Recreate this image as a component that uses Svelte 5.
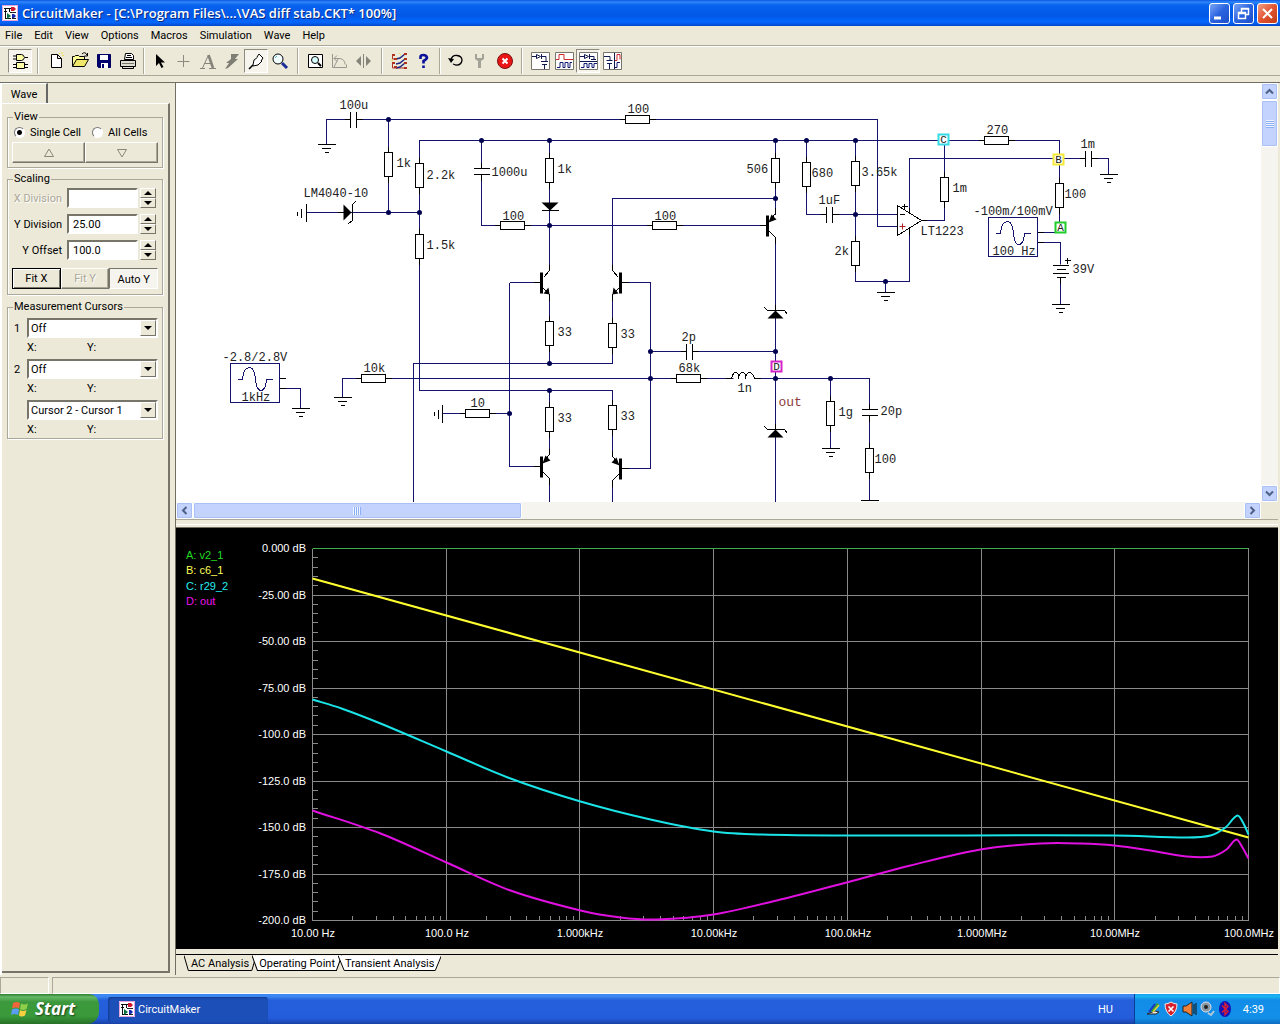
<script lang="ts">
  const menus = ['File', 'Edit', 'View', 'Options', 'Macros', 'Simulation', 'Wave', 'Help'];

  // '|' is a separator, '!' a narrow one
  const tools = [
    'parts', '|', 'new', 'open', 'save', 'print', '!',
    'arrow', 'wire', 'text', 'delete', 'probe', 'zoom', '|',
    'fit', 'rotate', 'mirror', '|', 'mode', 'help', '!',
    'reset', 'wrench', 'stop', '|', 'split1', 'split2', 'split3', 'split4',
  ];
  const pressed = ['parts', 'probe', 'split3'];

  let cell = $state('single');
  let yDivision = $state('25.00');
  let yOffset = $state('100.0');

  const wires = [
    'M326 144V119H350', 'M356 119H877V226H897', 'M388 119V212', 'M306 212H419',
    'M419 212V140H1059V158', 'M419 212V390H612V454', 'M481 140V168M481 174V225H549', 'M549 140V270',
    'M549 225H767', 'M612 270V198H775', 'M775 140V214', 'M509 282V466H541', 'M509 282H541',
    'M549 294V363', 'M612 294V363H413V502', 'M342 397V378H775', 'M621 282H650V468H621',
    'M650 351H686M692 351H775', 'M775 237V502', 'M775 378H869V409M869 415V500', 'M830 378V448',
    'M806 140V214H826M832 214H897', 'M855 140V281H909V228', 'M885 281V292', 'M909 213V158H1085',
    'M1091 158H1108V174', 'M921 220H944V140', 'M1059 158V232H1038', 'M1038 242H1060V304',
    'M280 388H300V408', 'M442 413H509', 'M549 390V454', 'M549 477V502M612 479V502',
  ];
  const nodes = [
    [388, 119], [388, 212], [419, 212], [481, 140], [549, 140], [549, 225], [549, 363], [549, 390],
    [650, 351], [650, 378], [509, 413], [775, 140], [806, 140], [855, 140], [775, 198], [855, 214],
    [885, 281], [775, 351], [775, 378], [830, 378],
  ];
  // top-centre of upright resistors, left-centre of flat ones
  const upright = [
    [388, 152], [419, 163], [419, 234], [549, 158], [549, 321], [612, 323], [549, 407], [612, 405],
    [775, 158], [806, 162], [855, 161], [855, 241], [944, 177], [1059, 183], [830, 401], [869, 448],
  ];
  const flat = [[625, 119], [500, 225], [652, 225], [361, 378], [465, 413], [676, 378], [984, 140]];
  const capsFlat = [[350, 119], [686, 351], [826, 214], [1085, 158]];
  const capsUpright = [[481, 168], [869, 409]];
  const grounds = [[326, 144], [342, 397], [300, 408], [885, 292], [1108, 174], [1060, 304], [830, 448], [869, 500]];
  const labels: [string, number, number][] = [
    ['100u', 339, 108], ['1k', 396, 166], ['2.2k', 426, 178], ['1.5k', 426, 248], ['LM4040-10', 303, 196],
    ['100', 627, 112], ['1000u', 491, 175], ['1k', 557, 172], ['100', 502, 219], ['100', 654, 219],
    ['33', 557, 335], ['33', 620, 337], ['33', 557, 421], ['33', 620, 419], ['2p', 681, 340],
    ['68k', 678, 371], ['1n', 737, 391], ['506', 746, 172], ['680', 811, 176], ['3.65k', 861, 175],
    ['1uF', 818, 203], ['2k', 834, 254], ['LT1223', 920, 234], ['1m', 952, 191], ['270', 986, 133],
    ['1m', 1080, 147], ['100', 1064, 197], ['-100m/100mV', 973, 214], ['100 Hz', 992, 254],
    ['39V', 1072, 272], ['-2.8/2.8V', 222, 360], ['1kHz', 241, 400], ['10k', 363, 371],
    ['10', 470, 406], ['1g', 838, 415], ['20p', 880, 414], ['100', 874, 462],
  ];
  const probes: [string, number, number, string][] = [
    ['A', 1060, 227, '#1fce2b'], ['B', 1058, 159, '#f4e838'], ['C', 943, 139, '#35dbe6'], ['D', 776, 366, '#d426c8'],
  ];

  const legend = [
    ['A: v2_1', '#22dd22'], ['B: c6_1', '#ffff55'], ['C: r29_2', '#22eeee'], ['D: out', '#ee11ee'],
  ];
  const yLabels = ['0.000', '-25.00', '-50.00', '-75.00', '-100.0', '-125.0', '-150.0', '-175.0', '-200.0'];
  const xLabels = ['10.00 Hz', '100.0 Hz', '1.000kHz', '10.00kHz', '100.0kHz', '1.000MHz', '10.00MHz', '100.0MHz'];
  const left = 136, top = 20, width = 936, height = 372;
  const decade = width / 7;
  const step = height / 8;

  let ticks = '';
  for (let i = 0; i < 40; i++) ticks += `M${left} ${Math.round(top + (i * height) / 40)}h5`;
  for (let d = 0; d < 7; d++)
    for (let n = 2; n < 10; n++)
      ticks += `M${Math.round(left + (d + Math.log10(n)) * decade)} ${top + height}v-5`;

  const r29 = [
    [136, 171], [165, 180], [204, 195], [270, 223], [334, 250], [404, 273], [474, 291], [537, 303],
    [584, 306], [674, 307], [938, 307], [1010, 309], [1034, 307], [1049, 299], [1061, 287], [1067, 295], [1072, 306],
  ];
  const out = [
    [136, 282], [204, 305], [270, 334], [334, 362], [404, 382], [444, 389], [480, 391], [537, 386],
    [604, 371], [670, 354], [734, 337], [804, 321], [864, 315], [904, 315], [938, 317], [974, 322],
    [1010, 328], [1036, 328], [1050, 321], [1060, 311], [1066, 319], [1072, 330],
  ];

  function smooth(p: number[][]) {
    let d = `M${p[0]}`;
    for (let i = 0; i < p.length - 1; i++) {
      const a = p[i - 1] ?? p[i], b = p[i], c = p[i + 1], e = p[i + 2] ?? c;
      const w = (c[0] - b[0]) / 3;
      const s1 = i ? (c[1] - a[1]) / (c[0] - a[0]) : (c[1] - b[1]) / (c[0] - b[0]);
      const s2 = (e[1] - b[1]) / (e[0] - b[0]);
      d += `C${b[0] + w} ${b[1] + s1 * w} ${c[0] - w} ${c[1] - s2 * w} ${c[0]} ${c[1]}`;
    }
    return d;
  }
</script>

{#snippet logo()}
  <svg width="16" height="16" viewBox="0 0 16 16" aria-hidden="true">
    <rect width="16" height="16" fill="#fff" />
    <path d="M.5 .5h15v15H.5z" fill="none" stroke="#e7a4d8" />
    <path d="M2 3.500h8M3.500 3v10M2 6.500h3M7.500 4v3M3 13.500h6" stroke="#111" />
    <path d="M9 2h3l2 2-2 2H9z" fill="#d01830" />
    <path d="M5 8l4 3-4 3z" fill="#0a7040" />
    <path d="M10 9h2l2 2-2 2h-2z" fill="#1a28b0" />
    <path d="M8 7.500h6M10 13.500h4" stroke="#222" />
  </svg>
{/snippet}

{#snippet icon(name: string)}
  <svg width="22" height="22" viewBox="0 0 22 22" fill="none" stroke="#000" aria-hidden="true">
    {#if name === 'parts'}
      <path d="M7.500 4.500h5q2 0 3 3-1 3-3 3h-5zM4 6h3M4 9h3M16 7.500h3M7.500 12.500h8v6h-8zM4 14.500h3M4 17.500h3M16 14.500h3M16 17.500h3" fill="#ffffa8" />
    {:else if name === 'new'}
      <path d="M6.500 4.500h6l4 4v9h-10zM12.500 4.500v4h4" fill="#fff" />
      <path d="M14 3l1 1M17 2v2M19 5l-2 1" stroke="#e8e040" />
    {:else if name === 'open'}
      <path d="M3.500 16.500v-10h2l1-1h3l1 1h5v3" fill="#ffff99" />
      <path d="M3.500 16.500l4-7h12l-4 7z" fill="#f0e868" />
      <path d="M13 4q3-3 5 1M18.500 3v3h-3" />
    {:else if name === 'save'}
      <path d="M4.500 4.500h13v13h-12l-1-1z" fill="#00006c" stroke="#000060" />
      <path d="M7 5h8v5H7zM8 13h7v5H8z" fill="#fff" stroke="none" />
      <path d="M9 14h2v4H9z" fill="#00006c" stroke="none" />
    {:else if name === 'print'}
      <path d="M7.500 9.500l1-6h6l2 2v4z" fill="#fff" />
      <path d="M10 5.500h4M9 7.500h6" />
      <path d="M3.500 10.500h15v6h-15zM5.500 16.500h11v2h-11z" fill="#e0ded0" />
      <path d="M5 13.500h12" stroke="#77766d" />
    {:else if name === 'arrow'}
      <path d="M7 4v12l3-3 2.500 5 2-1-2.500-4.500h4z" fill="#000" stroke="none" />
    {:else if name === 'wire'}
      <path d="M10.500 5v12M4.500 11.500h12" stroke="#8c8b80" />
    {:else if name === 'text'}
      <path d="M3 18.500h5M12 18.500h7M5.500 18L11.500 5M7.500 13.500h7" stroke="#85847b" />
      <path d="M11.500 5l4.500 13" stroke="#85847b" stroke-width="2.600" />
    {:else if name === 'delete'}
      <path d="M10 4h8l-4 5h3L7 18l-3 1 4-6H5l5-4z" fill="#807f76" stroke="none" />
    {:else if name === 'probe'}
      <path d="M4 19l4-4" stroke-width="1.600" />
      <path d="M8 15l1-5 4-3 4 4-4 4-5 1z" fill="#fff" />
      <path d="M12 7l2-3 4 4-2 3" fill="#fff" />
    {:else if name === 'zoom'}
      <circle cx="9" cy="9" r="5" fill="#f3ffff" />
      <path d="M13 13l5 5" stroke="#1b2c96" stroke-width="3" />
      <path d="M6 8l2-2" stroke="#55bbcc" />
    {:else if name === 'fit'}
      <path d="M3.500 4.500h14v13h-14z" fill="#fff" />
      <circle cx="10" cy="10" r="3.500" fill="#d8ffff" /><path d="M13 13l3 3" stroke-width="2" />
    {:else if name === 'rotate'}
      <path d="M3.500 4v13.500h14v-3M5 8.500h6q5 1 5 6M8 5.500l-3 3 3 3M9 9l-4 8" stroke="#99988e" />
    {:else if name === 'mirror'}
      <path d="M8 6v10l-5-5zM13 6v10l5-5z" fill="#85847b" stroke="none" /><path d="M10.500 4v14" stroke="#85847b" />
    {:else if name === 'mode'}
      <path d="M3.500 4v5h3M3.500 12v6h14" stroke="#b03020" />
      <path d="M7 9l4-1 5-4M7 14l4-1 5-4M7 18l4-1 5-4" stroke="#202880" stroke-width="1.500" />
      <path d="M3 5h3M5 9h3M15 4h3M15 9h3M3 13h3M5 17h3M15 13h3M15 18h3" stroke="#b03020" stroke-width="2" />
      <path d="M10 3l2 2M2 10l2 1" stroke="#e7d94e" />
    {:else if name === 'help'}
      <path d="M7.500 9V6.500Q8 5 10.500 5t3.500 2.500Q14 9 10.500 11v2.500M10.500 15.500V18" stroke="#0c109a" stroke-width="2.600" />
    {:else if name === 'reset'}
      <path d="M6 10q1-5 6-4.500 5 .5 5 5-1 5-6 4.500l-3-1" stroke-width="1.300" /><path d="M3 8l6 1-3 4z" fill="#000" stroke="none" />
    {:else if name === 'wrench'}
      <path d="M6 4v5l3 2v7h3v-7l3-2V4h-2v4H8V4z" fill="#a3a298" stroke="none" />
    {:else if name === 'stop'}
      <circle cx="12" cy="11" r="7.500" fill="#e91414" stroke="#7b1010" />
      <path d="M9.500 8.500l5 5M14.500 8.500l-5 5" stroke="#fff" stroke-width="2" />
    {:else}
      <path d="M2.500 2.500h18v17h-18z" fill="#fff" stroke="#77766d" />
      {#if name === 'split1'}
        <path d="M3 6.500h4M7.500 4.500l4 2-4 2zM12.500 4v5M13 6.500h4v5M12 11.500h7M13 14.500h5M15.500 14.500V19" stroke="#101850" />
      {:else if name === 'split2'}
        <path d="M3 9.500h3v-5h5v5h9" stroke="#d02828" /><path d="M4 17.500h3v-5h3v5h2v-5h3v5h2v-5h2" stroke="#101870" />
      {:else if name === 'split3'}
        <path d="M3 6.500h4M7.500 4.500l4 2-4 2zM12.500 4v5M13 6.500h4v3M14 9.500h5M3 11.500h17" stroke="#101850" />
        <path d="M4 17.500h3v-4h3v4h2v-4h3v4h2v-4h3" stroke="#101870" />
      {:else}
        <path d="M3 6.500h6v4M5.500 10.500h6M6 13.500h5M8.500 13.500V19M13.500 3v16" stroke="#101850" />
        <path d="M14 10.500h2v-6h3v5" stroke="#d02828" /><path d="M14 17.500h2v-5h3" stroke="#101870" />
      {/if}
    {/if}
  </svg>
{/snippet}

{#snippet spin(label: string)}
  <div class="spin">
    <button aria-label="{label} up"><i class="tri up"></i></button>
    <button aria-label="{label} down"><i class="tri"></i></button>
  </div>
{/snippet}

{#snippet source(x: number, y: number)}
  <g transform="translate({x} {y})" class="wire">
    <rect width="49" height="39" fill="#fff" />
    <path d="M7 16h5Q13 4 19 4Q24 4 25 16Q26 27 30.500 27Q35 27 36 16h6" />
    <path class="part" d="M49 15h6M49 25h6" />
  </g>
{/snippet}

{#snippet transistor(x: number, y: number, flip: number, pnp: boolean)}
  <g transform="translate({x} {y}) scale({flip} 1)">
    <path d="M-8 0H0M2 -5L8 -12V-18M2 6L8 12V18" class="part" />
    <path d="M0 -10V11" stroke="#000" stroke-width="3" />
    {#if pnp}
      <path d="M1 -3L4 -11L9 -6z" />
    {:else}
      <path d="M8 12L2 11L7 5z" />
    {/if}
  </g>
{/snippet}

<div class="desktop">
  <header class="titlebar">
    {@render logo()}
    <h1>CircuitMaker - [C:\Program Files\...\VAS diff stab.CKT* 100%]</h1>
    <button class="winbtn" aria-label="Minimize"><svg width="19" height="19"><path d="M4 14h7" stroke="#fff" stroke-width="3" /></svg></button>
    <button class="winbtn" aria-label="Restore">
      <svg width="19" height="19" fill="none" stroke="#fff"><path d="M7.500 8V4.500h7v6H12M7 5h8M4.500 8.500h7v6h-7zM4 9.500h8" stroke-width="1.500" /></svg>
    </button>
    <button class="winbtn close" aria-label="Close"><svg width="19" height="19"><path d="M5 5l9 9M14 5l-9 9" stroke="#fff" stroke-width="2" /></svg></button>
  </header>

  <nav class="menubar">
    {#each menus as menu}
      <button>{menu}</button>
    {/each}
  </nav>

  <div class="toolbar">
    {#each tools as tool}
      {#if tool === '|' || tool === '!'}
        <span class="sep" class:narrow={tool === '!'}></span>
      {:else}
        <button class:pressed={pressed.includes(tool)} aria-label={tool}>{@render icon(tool)}</button>
      {/if}
    {/each}
  </div>

  <main>
    <aside>
      <div class="tabrow"><button class="tab">Wave</button></div>
      <div class="panel">
        <fieldset class="view">
          <legend>View</legend>
          <div class="radios">
            <label><input type="radio" value="single" bind:group={cell} />Single Cell</label>
            <label><input type="radio" value="all" bind:group={cell} />All Cells</label>
          </div>
          <div class="buttons">
            <button aria-label="Previous cell"><svg width="12" height="10"><path d="M1.500 8.500h9L6 1z" fill="none" stroke="#8a8878" /></svg></button>
            <button aria-label="Next cell"><svg width="12" height="10"><path d="M1.500 1.500h9L6 9z" fill="none" stroke="#8a8878" /></svg></button>
          </div>
        </fieldset>

        <fieldset class="scaling">
          <legend>Scaling</legend>
          <div class="field"><label class="off" for="xdiv">X Division</label><input id="xdiv" disabled />{@render spin('X Division')}</div>
          <div class="field"><label for="ydiv">Y Division</label><input id="ydiv" bind:value={yDivision} />{@render spin('Y Division')}</div>
          <div class="field"><label for="yoff">Y Offset</label><input id="yoff" bind:value={yOffset} />{@render spin('Y Offset')}</div>
          <div class="buttons fit">
            <button class="default">Fit X</button>
            <button disabled>Fit Y</button>
            <button class="down">Auto Y</button>
          </div>
        </fieldset>

        <fieldset class="cursors">
          <legend>Measurement Cursors</legend>
          {#each ['1', '2', ''] as n}
            <div class="cursor">
              <label for="cursor{n}">{n}</label>
              <span class="combo">
                <select id="cursor{n}" aria-label={n ? `Cursor ${n}` : 'Difference'}><option>{n ? 'Off' : 'Cursor 2 - Cursor 1'}</option></select>
                <span class="drop"><i class="tri"></i></span>
              </span>
            </div>
            <div class="xy"><span>X:</span><span>Y:</span></div>
          {/each}
        </fieldset>
      </div>
    </aside>

    <section class="work">
      <div class="sheet">
        <svg class="canvas" role="img" aria-label="Schematic">
          <!-- sheet scroll offset -->
          <g transform="translate(-175.5 -82.5)">
            <path class="wire" d={wires.join('')} />
            {#each nodes as [x, y]}
              <circle cx={x} cy={y} r="2.500" fill="#000050" />
            {/each}
            {#each upright as [x, y]}
              <path class="part" d="M{x} {y - 6}v36" />
              <rect class="part body" x={x - 4} {y} width="8" height="24" />
            {/each}
            {#each flat as [x, y]}
              <path class="part" d="M{x - 6} {y}h36" />
              <rect class="part body" {x} y={y - 4} width="24" height="8" />
            {/each}
            {#each capsFlat as [x, y]}
              <path class="part" d="M{x - 6} {y}h6m0 -8v16m6 -16v16m0 -8h6" />
            {/each}
            {#each capsUpright as [x, y]}
              <path class="part" d="M{x} {y - 6}v6m-8 0h16m-16 6h16m-8 0v6" />
            {/each}
            {#each grounds as [x, y]}
              <path class="part" d="M{x - 9} {y}h18m-14 4h9m-6 4h4" />
            {/each}
            <path class="part" d="M306 203v18M301 208v9M297 211v4M442 404v18M438 409v9M434 411v4" />

            <path d="M343 204v16l8-8z" />
            <path class="part" d="M337 212h6M355 201l-3 3v16l-4 3" />
            <path d="M541 202h17l-8.500 8z" />
            <path class="part" d="M541 210h17" />
            {#each [310, 429] as y}
              <path d="M775 {y}l8 8h-16z" />
              <path class="part" d="M764 {y - 3}l3 3h17l3 4M775 {y - 6}v6" />
            {/each}

            {@render transistor(541, 282, 1, false)}
            {@render transistor(620, 282, -1, false)}
            {@render transistor(767, 225, 1, true)}
            {@render transistor(541, 466, 1, true)}
            {@render transistor(620, 468, -1, true)}

            <path d="M733 376h22v5h-22z" fill="#fff" />
            <path class="part" d="M725 378h6q2-7 4-6 4 1 3 6 1-6 4-6 4 1 3 6 1-6 4-6 4 1 5 6h6" />

            <path class="part body" d="M897 205l24 15-24 15z" />
            <path class="part" d="M921 220h5M909 207v6M909 228v6M901 206h6M904 203v6M899 214h5" />
            <path d="M899 226h6M902 223v6" stroke="#b02020" />

            {@render source(988, 217)}
            {@render source(230, 363)}
            <path d="M1058 264h5v13h-5z" fill="#fff" />
            <path class="part" d="M1052 265h16M1056 269h9M1052 273h16M1056 277h9M1060 277v6M1064 260h6M1067 257v6" />

            {#each labels as [text, x, y]}
              <text {x} {y}>{text}</text>
            {/each}
            <text class="net" x="778" y="405">out</text>
            {#each probes as [text, x, y, color]}
              <rect x={x - 5} y={y - 5} width="10" height="10" fill="#fff" stroke={color} stroke-width="2" />
              <text class="probe" {x} y={y + 3} text-anchor="middle">{text}</text>
            {/each}
          </g>
        </svg>
        <div class="scroll vertical">
          <button aria-label="Scroll up"><svg width="9" height="7"><path d="M1 5.500l3.500-3.500L8 5.500" /></svg></button>
          <div class="thumb"><i class="grip"></i></div>
          <button aria-label="Scroll down"><svg width="9" height="7"><path d="M1 1.500L4.500 5 8 1.500" /></svg></button>
        </div>
      </div>

      <div class="scroll horizontal">
        <button aria-label="Scroll left"><svg width="7" height="9"><path d="M5.500 1L2 4.500 5.500 8" /></svg></button>
        <div class="thumb"><i class="grip"></i></div>
        <button aria-label="Scroll right"><svg width="7" height="9"><path d="M1.500 1L5 4.500 1.500 8" /></svg></button>
      </div>

      <div class="splitter"></div>

      <div class="plot">
        <svg viewBox="0 0 1102 421" role="img" aria-label="AC analysis">
          {#each legend as [text, color], i}
            <text x="10" y={31 + Math.round(i * 15.4)} fill={color}>{text}</text>
          {/each}
          <g transform="translate(.5 .5)" fill="none">
            {#each xLabels as _, i}
              <path class="grid" d="M{Math.round(left + i * decade)} {top}v{height}" />
            {/each}
            {#each yLabels as _, i}
              <path class="grid" d="M{left} {Math.round(top + i * step)}h{width}" />
            {/each}
            <path class="grid" d={ticks} />
            <path d="M{left} {top}h{width}" stroke="#3fae4a" />
            <path class="trace" d="M136 50L1072 309" stroke="#ffff30" />
            <path class="trace" d={smooth(r29)} stroke="#1be4e8" />
            <path class="trace" d={smooth(out)} stroke="#e010e0" />
          </g>
          {#each yLabels as label, i}
            <text x="130" y={24 + Math.round(i * step)} text-anchor="end" fill="#fff">{label} dB</text>
          {/each}
          {#each xLabels as label, i}
            <text x={Math.round(left + 1 + i * decade)} y="409" text-anchor="middle" fill="#fff">{label}</text>
          {/each}
        </svg>
      </div>

      <div class="sheets">
        {#each ['AC Analysis', 'Operating Point', 'Transient Analysis'] as name, i}
          <button class:active={i === 0}>
            <svg viewBox="0 0 100 16" preserveAspectRatio="none" aria-hidden="true"><path d="M0 .5L6 15.500H94L100 .5" vector-effect="non-scaling-stroke" /></svg>
            <span>{name}</span>
          </button>
        {/each}
      </div>
    </section>
  </main>

  <div class="status"><span></span><span></span></div>

  <footer class="taskbar">
    <button class="start">
      <svg width="20" height="20" viewBox="0 0 20 20" aria-hidden="true">
        <path d="M3 4q4-2 7 0L9 9.500q-3-2-7 0z" fill="#f0653a" />
        <path d="M11 4.500q3 2 7 0L16.500 10q-4 2-6.500 0z" fill="#8fd04a" />
        <path d="M2 10.500q4-2 7 0L8 16q-3-2-7 0z" fill="#5a9df5" />
        <path d="M10 11q3 2 6.500 0L15 16.500q-4 2-6 0z" fill="#fbd040" />
      </svg>
      Start
    </button>
    <button class="task">{@render logo()}CircuitMaker</button>
    <span class="lang">HU</span>
    <div class="tray">
      <svg width="88" height="18" viewBox="0 0 88 18" aria-hidden="true">
        <path d="M1 14h9l3-2-4-1z" fill="#eee" stroke="#222" /><path d="M4 11l7-8 2 1-6 8z" fill="#3a9c38" /><path d="M3 12l6-8" stroke="#1a35c8" stroke-width="2" /><path d="M7 12l6-7" stroke="#e8d832" stroke-width="1.500" />
        <path d="M25 2q3 2 6 2 0 8-6 12-6-4-6-12 3 0 6-2z" fill="#d8202c" stroke="#eee" /><path d="M22.500 6.500l5 5M27.500 6.500l-5 5" stroke="#fff" stroke-width="1.600" />
        <path d="M37 6h3l6-4v14l-6-4h-3z" fill="#f08038" stroke="#222" /><path d="M48 4v10M50 3v12" stroke="#111" />
        <circle cx="60" cy="7" r="5" fill="#8997a2" stroke="#dde" /><circle cx="60" cy="7" r="2" fill="#222" /><path d="M62 13l3 2 3-4" fill="none" stroke="#b4c8d8" stroke-width="2" />
        <ellipse cx="79" cy="9" rx="6" ry="8" fill="#1414b8" /><path d="M76 5.500l6 6-3 3V3.500l3 3-6 6" fill="none" stroke="#e02030" stroke-width="1.400" />
      </svg>
      <time>4:39</time>
    </div>
  </footer>
</div>

<style>
  :global(body) { background: #ece9d8; }
  .desktop {
    --face: #ece9d8; --shade: #aca899; --dark: #716f64;
    display: flex; flex-direction: column; min-height: 100vh; background: var(--face);
    font: 11px/13px Roboto, Arial, sans-serif; color: #000;
  }
  button { font: inherit; color: inherit; border: 0; padding: 0; background: none; }
  svg { display: block; flex: none; }
  fieldset { margin: 0; min-width: 0; }

  .titlebar {
    display: flex; align-items: center; gap: 3px; height: 26px; padding: 0 2px; box-sizing: border-box;
    background: linear-gradient(#0a55e0, #2f86fb 2px, #0863ee 5px, #0258e8 16px, #0468ff 22px, #0347c8);
  }
  h1 { flex: 1; margin: 0 0 0 1px; font: 600 13px/20px "Open Sans", "Trebuchet MS", sans-serif; color: #fff; text-shadow: 1px 1px #0a2a80; white-space: nowrap; }
  .winbtn { width: 21px; height: 21px; box-sizing: border-box; border: 1px solid #fff; border-radius: 3px; background: linear-gradient(135deg, #7ba6f5, #2a63e0 50%, #1d4fc8); }
  .winbtn.close { background: linear-gradient(135deg, #f0a088, #e25430 50%, #c03c18); }

  .menubar { display: flex; gap: 12px; height: 20px; padding: 0 5px; border-bottom: 1px solid var(--shade); box-sizing: border-box; line-height: 18px; }
  .toolbar { display: flex; align-items: center; height: 30px; padding-left: 8px; box-sizing: border-box; border-top: 1px solid #fff; border-bottom: 1px solid var(--shade); }
  .toolbar button { width: 24px; height: 24px; box-sizing: border-box; border: 1px solid transparent; }
  .toolbar .pressed { border-color: #8d8b80 #fff #fff #8d8b80; background: #f6f4ec; }
  .sep { width: 1px; height: 26px; margin: 0 5px; background: var(--shade); border-right: 1px solid #fff; }
  .sep.narrow { margin: 0 3px; }

  main { flex: 1; display: grid; grid-template-columns: 170px 1fr; column-gap: 5px; margin-top: 6px; border-top: 1px solid var(--dark); min-height: 880px; }
  aside { display: flex; flex-direction: column; border-left: 2px solid #fff; padding-bottom: 2px; }
  .tabrow { height: 20px; }
  .tab { height: 21px; width: 46px; border-right: 2px solid #666; border-top: 1px solid #fff; background: var(--face); }
  .panel { flex: 1; padding: 7px 5px 0; border: solid; border-color: #fff #77756a #77756a #fff; border-width: 1px 2px 2px 0; }
  fieldset { padding: 0 4px; box-sizing: border-box; border: 1px solid var(--shade); box-shadow: inset 1px 0 #fff, 1px 1px #fff; }
  legend { padding: 0 1px; margin-left: 1px; height: 12px; line-height: 12px; }
  .view { height: 57px; margin-bottom: 5px; }
  .radios { display: flex; gap: 9px; height: 19px; align-items: center; }
  .radios label { display: flex; align-items: center; gap: 5px; white-space: nowrap; }
  .radios input { appearance: none; width: 11px; height: 11px; margin: 0 0 0 2px; border-radius: 50%; border: 1px solid; border-color: #777 #fff #fff #777; background: #fff; box-sizing: border-box; }
  .radios input:checked { background: radial-gradient(#000 2px, #fff 3px); }
  .buttons { display: flex; height: 21px; }
  .buttons button { flex: 1; display: flex; align-items: center; justify-content: center; border: 1px solid; border-color: #fff #77756a #77756a #fff; box-shadow: inset -1px -1px var(--shade); }
  .buttons .default { border-color: #000; box-shadow: inset 1px 1px #fff, inset -1px -1px #77756a; }
  .buttons .down { border-color: #77756a #fff #fff #77756a; background: #f6f4ee; box-shadow: none; padding-top: 2px; }
  .buttons button:disabled, .off { color: var(--shade); text-shadow: 1px 1px #fff; }

  .scaling { height: 122px; margin-bottom: 6px; }
  .scaling legend { margin-bottom: 3px; }
  .field { display: flex; align-items: center; justify-content: flex-end; gap: 2px; height: 20px; margin-bottom: 6px; padding-right: 2px; }
  .field label { margin-right: 3px; }
  .field input { width: 71px; height: 20px; box-sizing: border-box; font: inherit; padding: 0 4px; border: 2px solid; border-color: #77756a #fff #fff #77756a; background: #fff; }
  .spin { display: flex; flex-direction: column; width: 16px; height: 20px; }
  .spin button { flex: 1; display: grid; place-items: center; }
  .spin button, .drop { border: 1px solid; border-color: #fff #77756a #77756a #fff; background: var(--face); }
  .tri { border: 4px solid transparent; border-top-color: #000; border-bottom: 0; }
  .tri.up { border-bottom: 4px solid #000; border-top: 0; }
  .fit { margin-top: 8px; }

  .cursors { height: 138px; }
  .cursors legend { margin-bottom: 5px; }
  .cursor { display: flex; align-items: center; }
  .cursor label { width: 15px; padding-left: 2px; box-sizing: border-box; }
  .combo { position: relative; flex: 1; }
  select { appearance: none; display: block; width: 100%; height: 20px; box-sizing: border-box; border: 2px solid; border-color: #77756a #fff #fff #77756a; border-radius: 0; background: #fff; color: #000; font: inherit; padding: 0 2px; }
  .drop { position: absolute; top: 2px; right: 2px; width: 14px; height: 14px; display: grid; place-items: center; pointer-events: none; }
  .xy { display: flex; height: 13px; padding: 3px 0 5px 15px; }
  .xy span { width: 60px; }

  .work { display: grid; grid-template-rows: 419fr 17px 9px 421fr 26px; min-width: 0; border-left: 1px solid var(--dark); padding-right: 2px; }
  .sheet { display: flex; min-height: 0; background: #fff; }
  .canvas { flex: 1; min-width: 0; height: 100%; font: 12px "Liberation Mono", "Courier New", monospace; }
  .canvas text { fill: #222; }
  .canvas .probe { font-size: 11px; }
  .canvas .net { fill: #8c3c3c; font-size: 13px; }
  .wire, .part { fill: none; stroke-width: 1; shape-rendering: crispEdges; }
  .wire { stroke: #14146e; }
  .part { stroke: #000; }
  .body { fill: #fff; }

  .scroll { display: flex; background: #f5f4ee; }
  .scroll button, .thumb { display: grid; place-items: center; box-sizing: border-box; border: 1px solid #fff; border-radius: 2px; background: #c3d3fd; box-shadow: inset 0 0 0 1px #a9c0f4; }
  .scroll button { width: 17px; height: 17px; }
  .scroll svg { fill: none; stroke: #4d6185; stroke-width: 2; }
  .vertical { flex-direction: column; width: 17px; }
  .vertical .thumb { height: 47px; margin-bottom: auto; }
  .horizontal { margin-right: 17px; }
  .horizontal .thumb { width: 30.3%; margin-right: auto; }
  .grip { width: 8px; height: 8px; background: repeating-linear-gradient(#eef4ff 0 1px, #8cb0f8 1px 2px); }
  .horizontal .grip { background: repeating-linear-gradient(90deg, #eef4ff 0 1px, #8cb0f8 1px 2px); }
  .splitter { border-top: 1px solid var(--shade); border-bottom: 1px solid var(--dark); box-shadow: inset 0 4px var(--face), inset 0 5px #fff; }

  .plot { min-height: 0; background: #000; overflow: hidden; font: 11px/13px "Liberation Sans", Arial, sans-serif; }
  .plot svg { width: 100%; height: 100%; }
  .grid { stroke: #8a8a8a; shape-rendering: crispEdges; }
  .trace { stroke-width: 2; }

  .sheets { display: flex; align-items: flex-start; padding: 6px 0 0 8px; box-shadow: inset 0 5px var(--face), inset 0 6px #000; }
  .sheets button { position: relative; height: 16px; padding: 0 7px; margin-right: -4px; }
  .sheets svg { position: absolute; inset: 0; width: 100%; height: 100%; fill: #fff; stroke: #000; }
  .sheets .active svg { fill: var(--face); }
  .sheets span { position: relative; }

  .status { display: flex; gap: 3px; height: 17px; margin-top: 2px; }
  .status span { flex: 1; border: 1px solid; border-color: var(--shade) #fff #fff var(--shade); }
  .status span:first-child { flex: none; width: 47px; }

  .taskbar {
    display: flex; align-items: center; height: 30px; color: #fff;
    background: linear-gradient(#3a80f0, #3f8cf3 2px, #2560dc 6px, #245ddb 24px, #1941a5);
  }
  .start { display: flex; align-items: center; gap: 5px; width: 99px; height: 30px; padding-left: 10px; border-radius: 0 10px 12px 0; background: linear-gradient(#2f7d2f, #65b865 3px, #3c983c 8px, #3a9a3a 22px, #277027); font: italic bold 17px/22px "Open Sans", sans-serif; text-shadow: 1px 1px 2px #1a401a; }
  .task { display: flex; align-items: center; gap: 3px; width: 160px; height: 25px; margin-left: 9px; padding-left: 11px; border-radius: 3px; background: #1c4fb8; box-shadow: inset 1px 1px 2px #123a90; }
  .lang { margin-left: auto; margin-right: 21px; }
  .tray { display: flex; align-items: center; justify-content: space-between; width: 146px; height: 30px; padding: 0 16px 0 11px; box-sizing: border-box; border-left: 1px solid #0a3c96; background: linear-gradient(#1a9af0, #19b9f3 2px, #128ce8 6px, #1290e8 24px, #0f6cc0); }
</style>
